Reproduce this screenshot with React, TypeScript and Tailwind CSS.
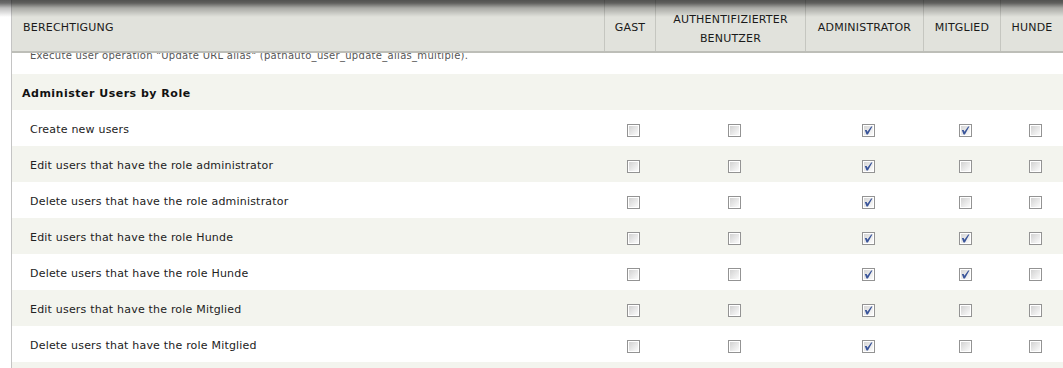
import React from "react";

const COLS = "grid-cols-[593px_51px_150px_118px_77px_62px]";

type Row = { label: string; checks: boolean[] };

const rows: Row[] = [
  { label: "Create new users", checks: [false, false, true, true, false] },
  { label: "Edit users that have the role administrator", checks: [false, false, true, false, false] },
  { label: "Delete users that have the role administrator", checks: [false, false, true, false, false] },
  { label: "Edit users that have the role Hunde", checks: [false, false, true, true, false] },
  { label: "Delete users that have the role Hunde", checks: [false, false, true, true, false] },
  { label: "Edit users that have the role Mitglied", checks: [false, false, true, false, false] },
  { label: "Delete users that have the role Mitglied", checks: [false, false, true, false, false] },
];

function Checkbox({ checked, id }: { checked: boolean; id: string }) {
  return (
    <svg width="13" height="13" viewBox="0 0 13 13" className="block">
      <defs>
        <linearGradient id={id} x1="0" y1="0" x2="1" y2="1">
          <stop offset="0" stopColor={checked ? "#d6d6d6" : "#d2d2d2"} />
          <stop offset="1" stopColor="#fbfbfb" />
        </linearGradient>
      </defs>
      <rect x="0.5" y="0.5" width="12" height="12" fill="#ffffff" stroke="#939393" />
      <rect x="2" y="2" width="9" height="9" fill={`url(#${id})`} />
      {checked && (
        <path
          d="M2.8 6 L4.7 6 L5.4 7.8 L9.2 2.4 L10.4 2.4 L5.9 10.4 L4.5 10.4 Z"
          fill="#3a559a"
        />
      )}
    </svg>
  );
}

export default function App() {
  const font = { fontFamily: '"DejaVu Sans", Verdana, sans-serif' };
  return (
    <div className="relative w-[1063px] h-[368px] overflow-hidden bg-white" style={font}>
      <div className="ml-[11px] border-l border-[#c4c4c4] w-[1052px]">
        {/* header */}
        <div className={`grid ${COLS} h-[53px] bg-[#e1e2dc] border-b-2 border-[#bdbeb8] text-[11px] tracking-[0.2px] text-[#1a1a1a]`}>
          <div className="flex items-center pt-[6px] pl-[11px] border-r border-[#c5c6c0]">BERECHTIGUNG</div>
          <div className="flex items-center justify-center pt-[6px] border-r border-[#c5c6c0]">GAST</div>
          <div className="flex items-center justify-center pt-[6px] border-r border-[#c5c6c0] text-center leading-[19px]">
            AUTHENTIFIZIERTER<br />BENUTZER
          </div>
          <div className="flex items-center justify-center pt-[6px] border-r border-[#c5c6c0]">ADMINISTRATOR</div>
          <div className="flex items-center justify-center pt-[6px] border-r border-[#c5c6c0]">MITGLIED</div>
          <div className="flex items-center justify-center pt-[6px]">HUNDE</div>
        </div>

        {/* clipped description row (top hidden under the sticky header) */}
        <div className="h-[21px] overflow-hidden bg-white">
          <div className="pl-[18px] -mt-[4px] text-[10px] leading-[13px] tracking-[0.3px] text-[#555] whitespace-nowrap">
            Execute user operation "Update URL alias" (pathauto_user_update_alias_multiple).
          </div>
        </div>

        {/* group row */}
        <div className="h-[36px] bg-[#f3f4ee] flex items-center pt-[4px] pl-[10px] text-[11px] font-bold tracking-[0.5px] text-[#111]">
          Administer Users by Role
        </div>

        {rows.map((r, i) => (
          <div
            key={i}
            className={`grid ${COLS} h-[36px] ${i % 2 === 0 ? "bg-white" : "bg-[#f3f4ee]"}`}
          >
            <div className="flex items-center pt-[4px] pl-[18px] text-[11px] tracking-[0.2px] text-[#222]">
              {r.label}
            </div>
            {r.checks.map((c, j) => (
              <div key={j} className="flex justify-center items-start pt-[14px] pl-[6px]">
                <Checkbox checked={c} id={`g${i}_${j}`} />
              </div>
            ))}
          </div>
        ))}
        <div className="h-[36px] bg-[#f3f4ee]" />
      </div>

      {/* top shadow overlay */}
      <div className="pointer-events-none absolute top-0 left-0 right-0 h-[18px] bg-[linear-gradient(to_bottom,rgba(0,0,0,0.64)_0px,rgba(0,0,0,0.58)_3px,rgba(0,0,0,0.25)_8px,rgba(0,0,0,0)_17px)]" />
    </div>
  );
}
